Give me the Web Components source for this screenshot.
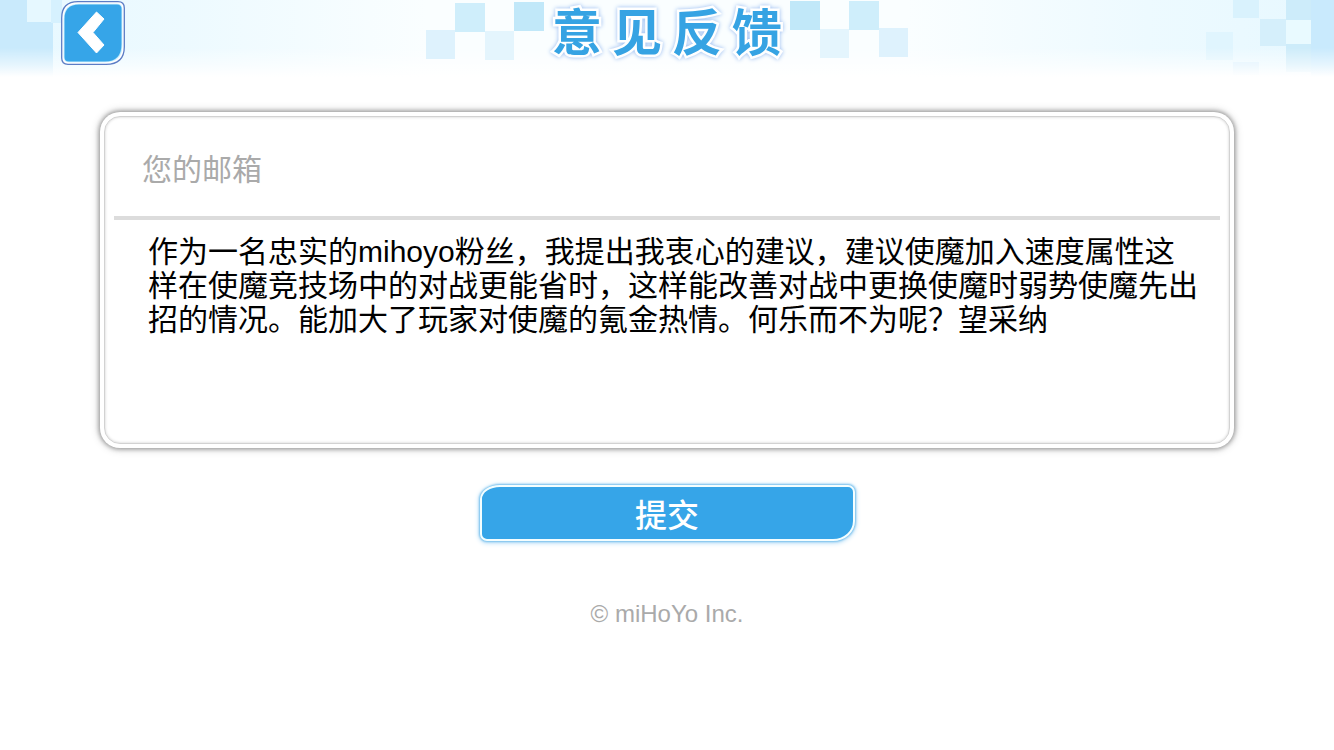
<!DOCTYPE html>
<html lang="zh-CN">
<head>
<meta charset="utf-8">
<meta name="viewport" content="width=device-width, initial-scale=1">
<title>意见反馈</title>
<style>
  body { margin: 0; background: #fff; font-family: "Liberation Sans", "Noto Sans CJK SC", sans-serif; }
</style>
</head>
<body>
<feedback-page></feedback-page>

<script>
class BaseElement extends HTMLElement {
  connectedCallback() {
    if (!this.shadowRoot) this.attachShadow({ mode: "open" }).innerHTML = this.constructor.markup;
  }
}

customElements.define("back-button", class extends BaseElement {
  static markup = `
    <style>
      :host { display: block; }
      button { display: block; width: 64px; height: 64px; padding: 0; border: 0; background: none; cursor: pointer; }
      svg { display: block; width: 100%; height: 100%; }
    </style>
    <button type="button" aria-label="返回">
      <svg viewBox="0 0 64 64">
        <path d="M17 .7H57Q63.3 .7 63.3 7V46Q63.3 63.3 45 63.3H7Q.7 63.3 .7 57V17Q.7 .7 17 .7Z" fill="#fff" stroke="#5b7cc5" stroke-width="1.3"/>
        <path d="M18 2.7H56Q61.3 2.7 61.3 8V45Q61.3 61.3 44 61.3H8Q2.7 61.3 2.7 56V18Q2.7 2.7 18 2.7Z" fill="#c4ecfd"/>
        <path d="M18 3.500H56Q60.500 3.500 60.500 8V43Q60.500 60.500 44 60.500H8Q3.500 60.500 3.500 56V18Q3.500 3.500 18 3.500Z" fill="#36a5e8"/>
        <path d="M35.500 11L43 18L32 31.500L43 44L35.500 52L17 31.500Z" fill="#fff" stroke="#fff" stroke-width="1" stroke-linejoin="round"/>
      </svg>
    </button>`;
});

customElements.define("banner-title", class extends BaseElement {
  static markup = `
    <style>
      :host { display: flex; justify-content: center; align-items: flex-start; gap: 8px; }
      svg { display: block; width: 118px; height: 64px; }
      h1 { display: flex; gap: 10px; margin: 0; font-family: "Liberation Sans", "Noto Sans CJK SC", sans-serif; font-size: 50px; line-height: 68px; font-weight: 700; color: #36a3e3;
        -webkit-text-stroke: 5px #fff; paint-order: stroke fill; filter: drop-shadow(0 0 2px #93b8f0); }
    </style>
    <svg viewBox="0 0 118 64" aria-hidden="true">
      <path fill="#def2fd" d="M0 30h29v29H0z"/><path fill="#cfeefb" d="M29 3h30v29H29z"/>
      <path fill="#e4f5fd" d="M59 31h29v29H59z"/><path fill="#c1e8f9" d="M88 2h30v29H88z"/>
    </svg>
    <h1><span>意</span><span>见</span><span>反</span><span>馈</span></h1>
    <svg viewBox="0 0 118 64" aria-hidden="true">
      <path fill="#c1e8f9" d="M0 1h30v29H0z"/><path fill="#e4f5fd" d="M30 29h29v29H30z"/>
      <path fill="#cfeefb" d="M59 1h30v29H59z"/><path fill="#def2fd" d="M89 28h29v29H89z"/>
    </svg>`;
});

customElements.define("page-banner", class extends BaseElement {
  static markup = `
    <style>
      :host { display: grid; grid-template-columns: 1fr auto 1fr; align-items: start; position: relative; height: 77px;
        background: linear-gradient(90deg, #e7f8ff, #edfaff 14%, #fafeff 32%, #fafeff 68%, #edfaff 86%, #e7f8ff); }
      .deco { position: absolute; top: 0; width: 128px; height: 77px; }
      .left { left: 0; } .right { right: 0; }
      .fade { position: absolute; inset: 0; background: linear-gradient(#fff0 62%, #fff8 84%, #fff 100%); }
      back-button { position: relative; margin: 1px 0 0 61px; }
      banner-title { position: relative; }
    </style>
    <svg class="deco left" viewBox="0 0 128 77" aria-hidden="true">
      <path fill="#c9eafc" d="M0 0h53v77H0z"/><path fill="#e6f8ff" d="M27 0h24v22H27z"/><path fill="#d6f1fe" d="M51 0h11v23H51z"/>
    </svg>
    <svg class="deco right" viewBox="0 0 128 77" aria-hidden="true">
      <path fill="#d9f2fd" d="M27 0h26v18H27z"/><path fill="#cdecfa" d="M80 0h25v20H80zM80 44h25v28H80z"/>
      <path fill="#c9eafd" d="M105 0h23v77h-23z"/><path fill="#d5effb" d="M54 19h26v27H54z"/>
      <path fill="#e9faff" d="M80 20h25v24H80z"/><path fill="#e0f5fe" d="M0 32h27v28H0z"/><path fill="#d9f0fd" d="M27 62h26v13H27z"/>
    </svg>
    <div class="fade"></div>
    <back-button></back-button>
    <banner-title></banner-title>`;
});

customElements.define("feedback-panel", class extends BaseElement {
  static markup = `
    <style>
      :host { display: block; box-sizing: border-box; min-height: 336px; padding: 4px; border-radius: 20px; background: #fff; box-shadow: 0 0 4px 1px #999, 0 0 8px 1px #ccc; }
      .inner { box-sizing: border-box; min-height: 328px; padding: 0 9px; border: 1px solid #d2d2d2; border-radius: 16px; box-shadow: inset 0 0 3px #ccc; }
      input, textarea { display: block; box-sizing: border-box; width: 100%; margin: 0; border: 0; outline: 0; background: none; font-family: inherit; font-size: 30px; color: #000; }
      input { height: 103px; padding: 7px 28px 0; border-bottom: 4px solid #dcdcdc; }
      input::placeholder { color: #aaa; opacity: 1; }
      textarea { height: 216px; padding: 15px 20px 0 34px; line-height: 34px; resize: none; overflow: hidden; }
    </style>
    <div class="inner">
      <input type="email" aria-label="您的邮箱" placeholder="您的邮箱">
      <textarea aria-label="意见反馈" spellcheck="false">作为一名忠实的mihoyo粉丝，我提出我衷心的建议，建议使魔加入速度属性这样在使魔竞技场中的对战更能省时，这样能改善对战中更换使魔时弱势使魔先出招的情况。能加大了玩家对使魔的氪金热情。何乐而不为呢？望采纳</textarea>
    </div>`;
});

customElements.define("submit-button", class extends BaseElement {
  static markup = `
    <style>
      :host { display: block; width: 375px; max-width: 100%; }
      button { display: block; box-sizing: border-box; width: 100%; height: 56px; padding: 0; border: 2px solid #f4feff; border-radius: 20px 7px 22px 7px / 14px 7px 20px 7px;
        background: #36a5e8; box-shadow: 0 0 2px 1px #79c1ee, 0 1px 5px 1px #b4dcf6; color: #fff; font: 500 32px/52px "Noto Sans CJK SC", sans-serif; cursor: pointer; }
    </style>
    <button type="submit"><slot></slot></button>`;
});

customElements.define("feedback-page", class extends BaseElement {
  static markup = `
    <style>
      :host { display: block; }
      form { display: flex; flex-direction: column; align-items: center; gap: 37px; padding: 35px 100px 0; }
      feedback-panel { align-self: stretch; }
      footer { margin-top: 59px; text-align: center; font-size: 24px; line-height: 28px; color: #aaa; }
    </style>
    <page-banner></page-banner>
    <form onsubmit="return false">
      <feedback-panel></feedback-panel>
      <submit-button>提交</submit-button>
    </form>
    <footer>© miHoYo Inc.</footer>`;
});
</script>
</body>
</html>
